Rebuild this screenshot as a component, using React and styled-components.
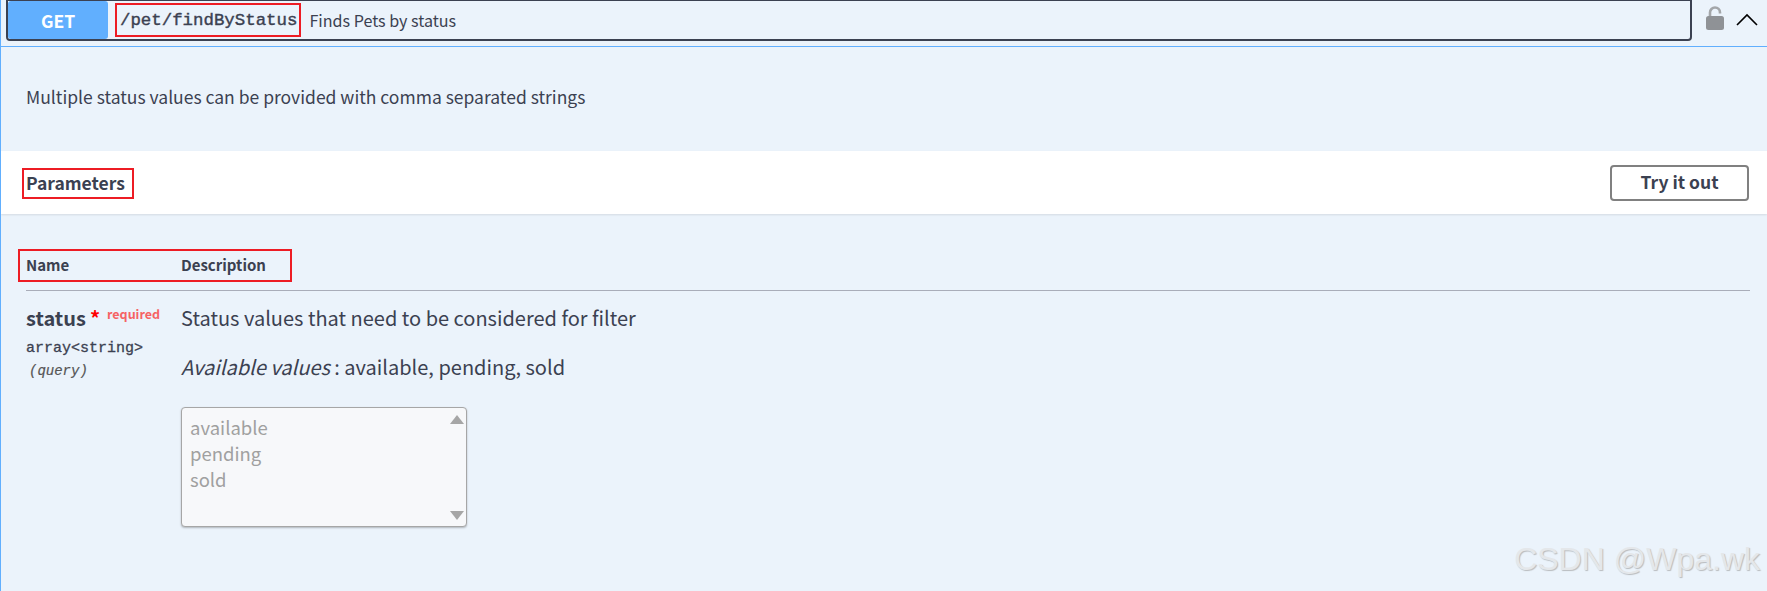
import styled, { createGlobalStyle } from 'styled-components';

const GlobalStyle = createGlobalStyle`
  html, body {
    margin: 0;
    padding: 0;
    background: #ebf3fb;
  }
  * {
    box-sizing: border-box;
  }
`;

const sans = `'Noto Sans CJK SC', 'Open Sans', sans-serif`;
const mono = `'Liberation Mono', 'DejaVu Sans Mono', monospace`;

const Page = styled.div`
  position: relative;
  width: 1767px;
  height: 591px;
  overflow: hidden;
  background: #ebf3fb;
  border-left: 1px solid #61affe;
  font-family: ${sans};
  color: #3b4151;
`;

const Summary = styled.div`
  display: flex;
  align-items: flex-start;
  height: 47px;
  padding-left: 5px;
  border-bottom: 1px solid #61affe;
`;

const OpBar = styled.div`
  display: flex;
  align-items: center;
  width: 1686px;
  height: 41px;
  border: 2px solid #3b4151;
  border-top-width: 1px;
  border-radius: 0 0 4px 4px;
`;

const Method = styled.div`
  display: flex;
  align-items: center;
  justify-content: center;
  width: 100px;
  height: 38px;
  background: #61affe;
  border-radius: 3px;
  color: #fff;
  font-size: 17.5px;
  font-weight: 700;
`;

const PathBox = styled.span`
  display: inline-flex;
  align-items: center;
  height: 34px;
  margin-left: 7px;
  padding: 0 2px 0 3px;
  border: 2px solid #ed1c24;
  font-family: ${mono};
  font-size: 17.4px;
  font-weight: 400;
  -webkit-text-stroke: 0.4px #3b4151;
`;

const PathSummary = styled.span`
  margin-left: 8px;
  font-size: 16.1px;
`;

const LockIcon = styled.svg`
  width: 18px;
  height: 24px;
  margin: 6px 0 0 14px;
`;

const Chevron = styled.svg`
  width: 24px;
  height: 14px;
  margin: 12px 0 0 11px;
  fill: none;
  stroke: #000;
  stroke-width: 1.6;
`;

const Description = styled.p`
  display: flex;
  align-items: center;
  height: 104px;
  margin: 0;
  padding: 0 0 6px 25px;
  font-size: 17.5px;
`;

const ParamsBand = styled.div`
  display: flex;
  align-items: center;
  justify-content: space-between;
  height: 63px;
  padding: 0 18px 0 21px;
  background: #fff;
  box-shadow: 0 1px 2px rgba(0, 0, 0, 0.1);
`;

const Title = styled.h4`
  margin: 2px 0 0;
  padding: 0 7px 2px 2px;
  border: 2px solid #ed1c24;
  font-size: 17.5px;
  font-weight: 700;
  line-height: 25px;
`;

const TryButton = styled.button`
  width: 139px;
  height: 36px;
  padding: 0 0 2px;
  background: #fff;
  border: 2px solid #808080;
  border-radius: 4px;
  color: #3b4151;
  font-family: ${sans};
  font-size: 17.5px;
  font-weight: 700;
  line-height: 1;
`;

const Table = styled.div`
  padding: 35px 17px 0 25px;
`;

const TableHead = styled.div`
  height: 42px;
  border-bottom: 1px solid #a9adb9;
`;

const HeadBox = styled.div`
  display: flex;
  align-items: center;
  width: 274px;
  height: 33px;
  margin-left: -8px;
  padding: 0 0 3px 6px;
  border: 2px solid #ed1c24;
  font-size: 15px;
  font-weight: 700;
`;

const HeadCell = styled.div`
  width: ${(props) => props.$width || 'auto'};
`;

const Row = styled.div`
  display: flex;
  padding-top: 13px;
`;

const NameCell = styled.div`
  width: 155px;
`;

const ParamName = styled.div`
  display: flex;
  align-items: flex-start;
  height: 35px;
  padding-top: 1px;
  font-size: 20px;
  font-weight: 700;
  line-height: 26px;
`;

const Star = styled.span`
  margin: 0 0 0 4px;
  color: #f00;
  font-size: 20px;
`;

const Required = styled.span`
  margin: -4px 0 0 7px;
  color: #f93e3e;
  opacity: 0.8;
  font-size: 12.5px;
`;

const ParamType = styled.div`
  font-family: ${mono};
  font-size: 15px;
  font-weight: 400;
  -webkit-text-stroke: 0.3px #3b4151;
  line-height: 20px;
`;

const ParamIn = styled.div`
  margin: 3px 0 0 3px;
  color: #555;
  font-family: ${mono};
  font-size: 14px;
  font-style: italic;
  font-weight: 400;
  -webkit-text-stroke: 0.2px #555;
  line-height: 18px;
`;

const DescCell = styled.div`
  flex: 1;
`;

const DescLine = styled.p`
  margin: 0 0 21px;
  font-size: 20px;
  line-height: 28px;
  em {
    font-style: italic;
  }
`;

const ListBox = styled.div`
  position: relative;
  width: 286px;
  height: 120px;
  margin-top: 26px;
  padding: 6px 8px;
  background: #f7f8fa;
  border: 1px solid #a6a6a6;
  border-radius: 4px;
  box-shadow: 0 1px 2px rgba(0, 0, 0, 0.25);
  color: #a0a0a0;
  font-size: 18.5px;
  line-height: 26px;
`;

const ScrollArrow = styled.span`
  position: absolute;
  right: 2px;
  ${(props) => (props.$down ? 'bottom: 6px;' : 'top: 7px;')}
  width: 0;
  height: 0;
  border-left: 7px solid transparent;
  border-right: 7px solid transparent;
  ${(props) => (props.$down ? 'border-top: 9px solid #a6a6a6;' : 'border-bottom: 9px solid #a6a6a6;')}
`;

const Watermark = styled.div`
  position: absolute;
  right: 7px;
  bottom: 13px;
  color: #e4e7ea;
  font-family: 'Liberation Sans', Arial, sans-serif;
  font-size: 32px;
  text-shadow: 1px 1px 1px #b9bcbf;
`;

const App = () => {
  return (
    <>
      <GlobalStyle />
      <Page>
        <Summary>
          <OpBar>
            <Method>GET</Method>
            <PathBox>/pet/findByStatus</PathBox>
            <PathSummary>Finds Pets by status</PathSummary>
          </OpBar>
          <LockIcon viewBox="0 0 18 24">
            <path d="M4 10.5V6.5a5 5 0 0 1 10 0v1" fill="none" stroke="#a3a6a9" strokeWidth="2.6" />
            <rect x="0" y="10" width="18" height="14" rx="2.5" fill="#8f9296" />
          </LockIcon>
          <Chevron viewBox="0 0 24 14">
            <path d="M2 13 L12 3 L22 13" />
          </Chevron>
        </Summary>
        <Description>Multiple status values can be provided with comma separated strings</Description>
        <ParamsBand>
          <Title>Parameters</Title>
          <TryButton>Try it out</TryButton>
        </ParamsBand>
        <Table>
          <TableHead>
            <HeadBox>
              <HeadCell $width="155px">Name</HeadCell>
              <HeadCell>Description</HeadCell>
            </HeadBox>
          </TableHead>
          <Row>
            <NameCell>
              <ParamName>
                status
                <Star>*</Star>
                <Required>required</Required>
              </ParamName>
              <ParamType>array&lt;string&gt;</ParamType>
              <ParamIn>(query)</ParamIn>
            </NameCell>
            <DescCell>
              <DescLine>Status values that need to be considered for filter</DescLine>
              <DescLine>
                <em>Available values</em> : available, pending, sold
              </DescLine>
              <ListBox>
                available
                <br />
                pending
                <br />
                sold
                <ScrollArrow />
                <ScrollArrow $down />
              </ListBox>
            </DescCell>
          </Row>
        </Table>
        <Watermark>CSDN @Wpa.wk</Watermark>
      </Page>
    </>
  );
};

export default App;
